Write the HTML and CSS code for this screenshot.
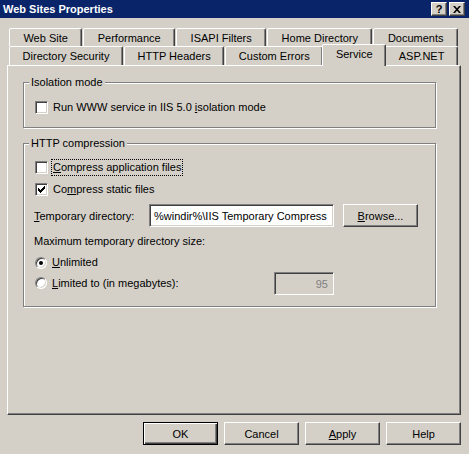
FILE: index.html
```html
<!DOCTYPE html>
<html lang="en">
<head>
  <meta charset="UTF-8" />
  <title>Web Sites Properties</title>
  <link rel="stylesheet" href="styles.css">
</head>
<body>
  <div class="dialog">
    <div class="titlebar">
      <span class="caption">Web Sites Properties</span>
      <div class="caption-buttons">
        <span class="cap-btn">?</span>
        <span class="cap-btn">
          <svg width="8" height="7" viewBox="0 0 8 7">
            <path d="M0 0h2l2 2.2 2-2.2h2l-3 3.5 3 3.5h-2l-2-2.2-2 2.2h-2l3-3.5z" fill="#000"/>
          </svg>
        </span>
      </div>
    </div>

    <!-- property sheet tabs, two rows -->
    <div class="tabs">
      <div class="tab-row back">
        <div class="tab">Web Site</div>
        <div class="tab">Performance</div>
        <div class="tab">ISAPI Filters</div>
        <div class="tab">Home Directory</div>
        <div class="tab">Documents</div>
      </div>
      <div class="tab-row front">
        <div class="tab">Directory Security</div>
        <div class="tab">HTTP Headers</div>
        <div class="tab">Custom Errors</div>
        <div class="tab selected">Service</div>
        <div class="tab">ASP.NET</div>
      </div>
    </div>

    <div class="panel">
      <fieldset class="group isolation">
        <legend>Isolation mode</legend>
        <div class="group-body">
          <label class="check">
            <span class="box"></span>
            <span class="text">Run WWW service in IIS 5.0 <u>i</u>solation mode</span>
          </label>
        </div>
      </fieldset>

      <fieldset class="group compression">
        <legend>HTTP compression</legend>
        <div class="group-body">
          <label class="check first">
            <span class="box"></span>
            <span class="text focus"><u>C</u>ompress application files</span>
          </label>
          <label class="check second">
            <span class="box">
              <svg width="11" height="11" viewBox="0 0 11 11">
                <rect x="2" y="4" width="1" height="3"/>
                <rect x="3" y="5" width="1" height="3"/>
                <rect x="4" y="6" width="1" height="3"/>
                <rect x="5" y="5" width="1" height="3"/>
                <rect x="6" y="4" width="1" height="3"/>
                <rect x="7" y="3" width="1" height="3"/>
                <rect x="8" y="2" width="1" height="3"/>
              </svg>
            </span>
            <span class="text">Co<u>m</u>press static files</span>
          </label>
          <div class="dir-row">
            <span class="dir-label"><u>T</u>emporary directory:</span>
            <input class="edit dir-edit" type="text" value="%windir%\IIS Temporary Compress">
            <button class="btn browse"><u>B</u>rowse...</button>
          </div>
          <div class="size-label">Maximum temporary directory size:</div>
          <label class="radio unlimited">
            <span class="dot-box"><span class="dot"></span></span>
            <span class="text"><u>U</u>nlimited</span>
          </label>
          <div class="limit-row">
            <label class="radio">
              <span class="dot-box"></span>
              <span class="text"><u>L</u>imited to (in megabytes):</span>
            </label>
            <input class="edit size-edit" type="text" value="95" disabled>
          </div>
        </div>
      </fieldset>
    </div>

    <div class="buttons">
      <button class="btn default">OK</button>
      <button class="btn">Cancel</button>
      <button class="btn"><u>A</u>pply</button>
      <button class="btn">Help</button>
    </div>
  </div>
</body>
</html>
```

FILE: styles.css
```css
* {
  box-sizing: border-box;
}
body {
  margin: 0;
  font-family: "Liberation Sans", Arial, sans-serif;
  font-size: 11px;
  color: #000;
}
.dialog {
  width: 469px;
  height: 454px;
  background-color: #d4d0c8;
  display: flex;
  flex-direction: column;
  overflow: hidden;
}
.titlebar {
  flex: none;
  height: 18px;
  background-color: #0a246a;
  color: #fff;
  font-weight: bold;
  display: flex;
  align-items: center;
  justify-content: space-between;
  padding: 0 4px 0 3px;
}
.caption-buttons {
  display: flex;
  gap: 2px;
}
.cap-btn {
  width: 16px;
  height: 14px;
  background-color: #d4d0c8;
  border: 1px solid;
  border-color: #fff #404040 #404040 #fff;
  box-shadow: inset -1px -1px #808080;
  color: #000;
  display: flex;
  align-items: center;
  justify-content: center;
  font-size: 11px;
  font-weight: bold;
  line-height: 1;
}
.cap-btn svg {
  display: block;
}

/* tabs */
.tabs {
  flex: none;
  margin: 10px 0 0 9px;
  width: 449px;
}
.tab-row {
  display: flex;
  gap: 1px;
}
.tab-row.back {
  height: 18px;
}
.tab-row.front {
  height: 19px;
}
.tab {
  flex: 1 1 auto;
  display: flex;
  align-items: center;
  justify-content: center;
  padding: 0 6px;
  background-color: #d4d0c8;
  border: 1px solid;
  border-bottom: 0;
  border-color: #fff #404040 transparent #fff;
  border-radius: 2px 2px 0 0;
  box-shadow: inset -1px 0 #808080;
  white-space: nowrap;
}
.tab.selected {
  position: relative;
  z-index: 1;
  margin: -2px -2px -1px;
  padding-bottom: 3px;
}

/* sheet */
.panel {
  flex: none;
  margin-left: 7px;
  width: 454px;
  height: 350px;
  border: 1px solid;
  border-color: #fff #404040 #404040 #fff;
  box-shadow: inset -1px -1px #808080;
  padding: 10px 0 0 15px;
}
.group {
  margin: 0;
  padding: 0;
  width: 413px;
  border: 1px solid #808080;
  box-shadow: 1px 1px #fff, inset 1px 1px #fff;
}
.group legend {
  margin-left: 5px;
  padding: 0 2px;
  line-height: 13px;
  background-color: #d4d0c8;
}
.compression {
  margin-top: 9px;
}
.isolation .group-body {
  padding: 12px 0 13px 10px;
}
.compression .group-body {
  padding: 11px 0 11px 10px;
}

.check,
.radio {
  display: flex;
  align-items: center;
  height: 13px;
  margin-left: 1px;
}
.check.second {
  margin-top: 9px;
}
.text {
  margin-left: 3px;
  padding: 1px;
  border: 1px solid transparent;
  line-height: 13px;
  white-space: nowrap;
}
.text.focus {
  border: 1px dotted #000;
}
.box {
  flex: none;
  width: 13px;
  height: 13px;
  background-color: #fff;
  border: 1px solid;
  border-color: #808080 #fff #fff #808080;
  box-shadow: inset 1px 1px #404040, inset -1px -1px #d4d0c8;
}
.box svg {
  display: block;
}
.dot-box {
  flex: none;
  width: 12px;
  height: 12px;
  border-radius: 50%;
  background-color: #fff;
  border: 1px solid;
  border-color: #808080 #fff #fff #808080;
  box-shadow: inset 1px 1px #404040, inset -1px -1px #d4d0c8;
  display: flex;
  align-items: center;
  justify-content: center;
}
.dot {
  width: 4px;
  height: 4px;
  border-radius: 50%;
  background-color: #000;
}

.dir-row {
  display: flex;
  align-items: center;
  height: 23px;
  margin-top: 8px;
}
.dir-label {
  width: 115px;
}
.edit {
  height: 23px;
  margin: 0;
  font: inherit;
  color: #000;
  background-color: #fff;
  border: 1px solid;
  border-color: #808080 #fff #fff #808080;
  box-shadow: inset 1px 1px #404040, inset -1px -1px #d4d0c8;
  padding: 0 4px;
  outline: none;
}
.dir-edit {
  width: 185px;
}
.size-edit {
  width: 60px;
  text-align: right;
  color: #808080;
  background-color: #d4d0c8;
  padding-right: 5px;
}
.size-label {
  margin-top: 8px;
  line-height: 13px;
}
.radio.unlimited {
  margin-top: 8px;
}
.limit-row {
  display: flex;
  align-items: center;
  justify-content: space-between;
  width: 300px;
  height: 23px;
  margin-top: 3px;
}
.limit-row .radio {
  margin-top: -1px;
}

/* push buttons */
.btn {
  width: 75px;
  height: 23px;
  margin: 0;
  padding: 0;
  font: inherit;
  color: #000;
  background-color: #d4d0c8;
  border: 1px solid;
  border-color: #fff #404040 #404040 #fff;
  box-shadow: inset -1px -1px #808080;
}
.btn.default {
  border-color: #000;
  box-shadow: inset 1px 1px #fff, inset -1px -1px #404040, inset -2px -2px #808080;
}
.browse {
  margin-left: 9px;
}
.buttons {
  flex: none;
  display: flex;
  justify-content: flex-end;
  gap: 6px;
  padding-right: 8px;
  margin-top: 7px;
}
```
